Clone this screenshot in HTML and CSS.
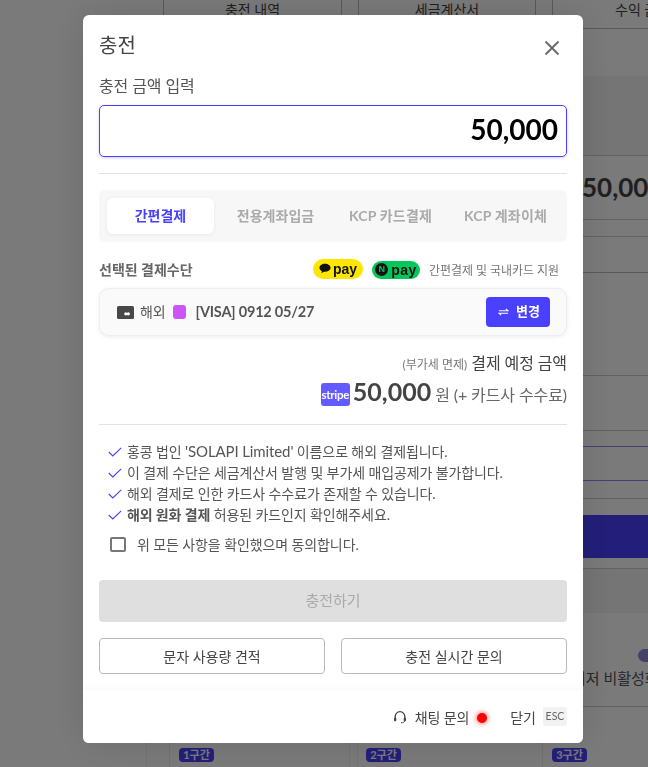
FILE: index.html
```html
<!DOCTYPE html>
<html lang="ko">
<head>
<meta charset="utf-8">
<title>충전</title>
<link rel="stylesheet" href="styles.css">
</head>
<body>
<div class="page">
  <div class="tabs-bg">
    <div class="tab-bg tab-a">충전 내역</div>
    <div class="tab-gap"></div>
    <div class="tab-bg tab-b">세금계산서</div>
    <div class="tab-gap"></div>
    <div class="tab-bg tab-c">수익 금액</div>
  </div>
  <div class="row-bg r48"></div>
  <div class="row-bg r79 shade"></div>
  <div class="row-bg r64 amount-bg">50,000</div>
  <div class="row-bg r17"></div>
  <div class="row-bg r36"></div>
  <div class="row-bg r103"></div>
  <div class="row-bg r55"></div>
  <div class="row-bg r16 blue-line"></div>
  <div class="row-bg r34 blue-line"></div>
  <div class="row-bg r18"></div>
  <div class="row-bg r16 no-line"></div>
  <div class="band-bg"></div>
  <div class="row-bg r11"></div>
  <div class="row-bg r44 shade no-line"></div>
  <div class="row-bg r94 off-bg">
    <span class="pill-bg"></span>
    <span class="off-text">최저 비활성화</span>
  </div>
  <div class="tiers-bg">
    <div class="tier-bg tier-pad"></div>
    <div class="tier-bg tier-lead"></div>
    <div class="tier-bg tier-a"><span class="tier-badge">1구간</span></div>
    <div class="tier-bg tier-gap"></div>
    <div class="tier-bg tier-b"><span class="tier-badge">2구간</span></div>
    <div class="tier-bg tier-c"><span class="tier-badge">3구간</span></div>
  </div>
</div>

<div class="overlay">
  <section class="modal">
    <div class="modal-body">
      <header class="modal-head">
        <h1 class="modal-title">충전</h1>
        <svg class="close" viewBox="0 0 16 16" width="16" height="16"><path d="M1.500 1.500 14.500 14.500M14.500 1.500 1.500 14.500" stroke="#6a6a6a" stroke-width="1.900" fill="none"/></svg>
      </header>
      <div class="field-label">충전 금액 입력</div>
      <div class="amount-input">50,000</div>
      <hr class="rule rule-a">
      <nav class="pay-tabs">
        <div class="pay-tab active">간편결제</div>
        <div class="pay-tab">전용계좌입금</div>
        <div class="pay-tab kcp">KCP 카드결제</div>
        <div class="pay-tab kcp">KCP 계좌이체</div>
      </nav>
      <div class="method-head">
        <div class="method-title">선택된 결제수단</div>
        <div class="badges">
          <span class="paybadge kakao"><svg viewBox="0 0 14 12" width="12" height="11"><path d="M7 .5C3.300.5.5 2.600.5 5.200c0 1.700 1.200 3.100 2.900 3.900L2.800 11.500 5.600 9.700C6.100 9.800 6.500 9.800 7 9.800c3.700 0 6.500-2 6.500-4.600S10.700.5 7 .5Z" fill="#111"/></svg>pay</span>
          <span class="paybadge naver"><span class="n-dot">N</span>pay</span>
          <span class="badge-note">간편결제 및 국내카드 지원</span>
        </div>
      </div>
      <div class="method-card">
        <svg class="card-ico" viewBox="0 0 17 13" width="17" height="13"><rect width="17" height="13" rx="1.500" fill="#484848"/><circle cx="8.800" cy="7.800" r="1.600" fill="#fff"/><circle cx="11.300" cy="7.800" r="1.600" fill="#fff"/></svg>
        <span class="region">해외</span>
        <span class="swatch"></span>
        <span class="card-name">[VISA] 0912 05/27</span>
        <button class="change-btn"><svg viewBox="0 0 12 10" width="11" height="10"><path d="M1 3.600H10.800L8.600 1.600M11 6.400H1.200L3.400 8.400" stroke="#fff" stroke-width="1.200" fill="none"/></svg><span class="change-label">변경</span></button>
      </div>
      <div class="sum-head"><span class="vat">(부가세 면제)</span> <span class="sum-title">결제 예정 금액</span></div>
      <div class="sum-line">
        <span class="stripe">stripe</span>
        <span class="sum-amount">50,000</span>
        <span class="sum-note">원 (+ 카드사 수수료)</span>
      </div>
      <hr class="rule rule-b">
      <ul class="notes">
        <li class="note"><svg viewBox="0 0 14 10" width="14" height="10"><path d="M.8 5 4.800 9 13.200 .8" stroke="#4a40ff" stroke-width="1.100" fill="none"/></svg><span>홍콩 법인 <span class="latin">'SOLAPI Limited'</span> 이름으로 해외 결제됩니다.</span></li>
        <li class="note"><svg viewBox="0 0 14 10" width="14" height="10"><path d="M.8 5 4.800 9 13.200 .8" stroke="#4a40ff" stroke-width="1.100" fill="none"/></svg>이 결제 수단은 세금계산서 발행 및 부가세 매입공제가 불가합니다.</li>
        <li class="note"><svg viewBox="0 0 14 10" width="14" height="10"><path d="M.8 5 4.800 9 13.200 .8" stroke="#4a40ff" stroke-width="1.100" fill="none"/></svg>해외 결제로 인한 카드사 수수료가 존재할 수 있습니다.</li>
        <li class="note"><svg viewBox="0 0 14 10" width="14" height="10"><path d="M.8 5 4.800 9 13.200 .8" stroke="#4a40ff" stroke-width="1.100" fill="none"/></svg><span><b class="strong">해외 원화 결제</b> 허용된 카드인지 확인해주세요.</span></li>
      </ul>
      <label class="agree"><span class="checkbox"></span>위 모든 사항을 확인했으며 동의합니다.</label>
      <button class="submit">충전하기</button>
      <div class="two-btns">
        <button class="ghost">문자 사용량 견적</button>
        <button class="ghost">충전 실시간 문의</button>
      </div>
    </div>
    <footer class="modal-foot">
      <svg class="headset" viewBox="0 0 14 14" width="14" height="14"><path d="M2.200 8V6.500a4.800 4.800 0 0 1 9.600 0V8" stroke="#444" stroke-width="1.300" fill="none"/><rect x="1" y="7.500" width="2.300" height="3.800" rx="1" fill="#444"/><rect x="10.700" y="7.500" width="2.300" height="3.800" rx="1" fill="#444"/><path d="M11.500 11c0 1.300-1.500 1.800-3.500 1.800" stroke="#444" stroke-width="1" fill="none"/></svg>
      <span class="foot-text chat">채팅 문의</span>
      <span class="red-dot"></span>
      <span class="foot-text">닫기</span>
      <span class="esc">ESC</span>
    </footer>
  </section>
</div>
</body>
</html>
```
FILE: styles.css
```css
* { box-sizing: border-box; }
html, body { margin: 0; height: 100%; overflow: hidden; }
body { font-family: Lato, "Noto Sans CJK KR", sans-serif; background: #fff; color: #444; }

/* page behind the dialog */
.page { height: 767px; padding-left: 100px; overflow: hidden; background: #fff; }
.tabs-bg { display: flex; height: 29px; font-size: 14px; color: #444; }
.tab-bg { flex: none; text-align: center; line-height: 19px; border-left: 1px solid #bbb; border-right: 1px solid #bbb; border-bottom: 1px solid #bbb; }
.tab-a { width: 179px; margin-left: 63px; }
.tab-b { width: 178px; }
.tab-c { width: 200px; text-align: left; padding-left: 62px; white-space: nowrap; }
.tab-gap { flex: none; width: 16px; }
.row-bg { border-bottom: 1px solid #ccc; }
.no-line { border-bottom: 0; }
.r48 { height: 47px; border-bottom: 0; }
.r79 { height: 80px; }
.r64 { height: 64px; }
.r17 { height: 17px; }
.r36 { height: 36px; border-bottom-color: #bbb; }
.r103 { height: 103px; }
.r55 { height: 55px; }
.r16 { height: 16px; }
.r34 { height: 34px; }
.r18 { height: 18px; }
.r11 { height: 11px; }
.r44 { height: 44px; }
.r94 { height: 94px; }
.shade { background: #f5f5f5; }
.blue-line { border-bottom-color: #8d87f5; }
.amount-bg { padding-left: 482px; font-size: 26px; font-weight: 700; line-height: 62px; white-space: nowrap; color: #444; }
.band-bg { height: 43px; background: #4a40ff; }
.off-bg { display: flex; flex-direction: column; align-items: flex-start; padding: 36px 0 0 472px; white-space: nowrap; font-size: 15px; color: #555; }
.pill-bg { width: 40px; height: 13px; margin-left: 66px; border-radius: 7px; background: #8f8bd8; }
.off-text { line-height: 20px; margin-top: 6px; }
.tiers-bg { display: flex; height: 61px; }
.tier-bg { flex: none; padding-top: 41px; height: 61px; }
.tier-pad { width: 46px; }
.tier-lead { width: 24px; border-left: 1px solid #eee; border-right: 1px solid #eee; }
.tier-a { width: 180px; padding-left: 9px; border-right: 1px solid #eee; }
.tier-gap { width: 7px; }
.tier-b { width: 186px; padding-left: 8px; border-left: 1px solid #eee; border-right: 1px solid #eee; }
.tier-c { width: 100px; padding-left: 9px; }
.tier-badge { display: block; height: 14px; width: 35px; border-radius: 4px; background: #4a40ff; color: #fff; font-size: 11px; font-weight: 700; line-height: 14px; text-align: center; white-space: nowrap; }

/* overlay */
.overlay { position: fixed; inset: 0; background: rgba(0,0,0,.52); padding: 15px 0 0 83px; }
.modal { width: 500px; height: 728px; display: flex; flex-direction: column; background: #fff; border-radius: 6px; box-shadow: 0 0 40px rgba(0,0,0,.13); overflow: hidden; }
.modal-body { flex: 1; padding: 0 16px; }
.modal-head { display: flex; justify-content: space-between; height: 50px; }
.modal-title { margin: 14px 0 0; font-size: 20px; line-height: 32px; font-weight: 400; color: #444; }
.close { margin: 25px 7px 0 0; }
.field-label { font-size: 16px; line-height: 24px; color: #555; margin-top: 9px; letter-spacing: -.1px; }
.amount-input { height: 52px; margin-top: 7px; border: 1.5px solid #4a40ff; border-radius: 5px; font-size: 28px; font-weight: 700; color: #000; text-align: right; line-height: 47px; padding-right: 8px; box-shadow: 0 1px 3px rgba(74,64,255,.25); }
.rule { margin: 0; border: 0; height: 1px; background: #e2e2e2; }
.rule-a { margin-top: 16px; }
.pay-tabs { display: flex; gap: 8px; height: 52px; margin-top: 16px; padding: 8px; background: #f7f7f7; border-radius: 6px; }
.pay-tab { flex: 1; text-align: center; font-size: 14px; font-weight: 700; line-height: 36px; color: #aaa; border-radius: 6px; white-space: nowrap; }
.pay-tab.kcp { letter-spacing: .2px; }
.pay-tab.active { background: #fff; color: #4a40ff; box-shadow: 0 1px 4px rgba(0,0,0,.06); }
.method-head { display: flex; justify-content: space-between; align-items: center; height: 46px; }
.method-title { font-size: 14px; font-weight: 700; color: #666; margin-top: 7px; }
.badges { display: flex; align-items: center; padding-right: 8px; margin-top: 9px; }
.paybadge { display: inline-flex; align-items: center; justify-content: center; border-radius: 10px; font-family: "Liberation Sans", sans-serif; font-weight: 700; color: #111; font-size: 14px; line-height: 18px; }
.kakao { width: 50px; height: 20px; background: #ffe600; gap: 2px; margin: -2px 9px 0 0; }
.naver { width: 48px; height: 18px; background: #03c75a; gap: 3px; margin-right: 9px; letter-spacing: .5px; }
.n-dot { width: 13px; height: 13px; border-radius: 50%; background: #111; color: #03c75a; font-size: 9px; line-height: 13px; text-align: center; letter-spacing: 0; }
.badge-note { font-size: 12px; color: #777; letter-spacing: -.05px; }
.method-card { display: flex; align-items: center; height: 48px; padding: 0 16px 0 17px; background: #fafafa; border: 1px solid #eee; border-radius: 10px; box-shadow: 0 1px 4px rgba(0,0,0,.08); }
.region { font-size: 14px; color: #555; margin: 0 0 2px 6px; letter-spacing: -.2px; }
.swatch { width: 13px; height: 14px; border-radius: 3px; background: #cc55f5; margin: 0 9px 0 8px; }
.card-name { font-size: 14.500px; font-weight: 700; color: #555; flex: 1; letter-spacing: -.2px; margin-bottom: 2px; }
.change-btn { display: flex; align-items: center; justify-content: center; gap: 7px; width: 64px; height: 30px; border: 0; border-radius: 4px; background: #4a40ff; color: #fff; font: 700 13px Lato, "Noto Sans CJK KR", sans-serif; padding: 0 0 0 2px; }
.change-label { margin-bottom: 3px; }
.sum-head { text-align: right; margin-top: 14px; line-height: 26px; height: 26px; }
.vat { font-size: 12px; color: #777; }
.sum-title { font-size: 16px; color: #444; letter-spacing: -.1px; }
.sum-line { display: flex; justify-content: flex-end; align-items: center; height: 34px; margin-top: 1px; }
.stripe { width: 29px; height: 23px; border-radius: 3px; background: #635bff; color: #fff; font-size: 11.500px; font-weight: 700; line-height: 23px; text-align: center; letter-spacing: -.3px; margin-right: 3px; }
.sum-amount { font-size: 25px; font-weight: 700; color: #444; margin: -7px 4px 0 0; }
.sum-note { font-size: 16px; color: #666; letter-spacing: -.1px; margin-top: -1px; }
.rule-b { margin-top: 13px; }
.notes { list-style: none; margin: 15px 0 0; padding: 0 0 0 9px; }
.note { display: flex; align-items: center; gap: 5px; height: 21px; font-size: 14px; color: #555; white-space: nowrap; letter-spacing: -.11px; }
.latin { font-size: 15px; }
.note svg { flex: none; margin-top: 3px; }
.strong { font-weight: 700; }
.agree { display: flex; align-items: center; height: 20px; margin: 10px 0 0 11px; font-size: 14px; color: #555; letter-spacing: -.1px; }
.checkbox { width: 16px; height: 15px; border: 2px solid #777; border-radius: 2px; margin-right: 11px; }
.submit { display: block; width: 100%; height: 42px; margin-top: 26px; border: 0; border-radius: 4px; background: #dfdfdf; color: #aaa; font: 400 15px Lato, "Noto Sans CJK KR", sans-serif; padding: 0 0 3px; }
.two-btns { display: flex; gap: 16px; margin-top: 16px; }
.ghost { flex: 1; height: 36px; background: #fff; border: 1px solid #bbb; border-radius: 4px; color: #444; font: 400 14px Lato, "Noto Sans CJK KR", sans-serif; padding: 0; }
.modal-foot { display: flex; align-items: center; justify-content: flex-end; height: 53px; padding: 0 16px; background: #fff; box-shadow: 0 -2px 6px rgba(0,0,0,.03); }
.headset { margin-right: 8px; }
.foot-text { font-size: 14px; color: #444; }
.chat { letter-spacing: -.1px; }
.red-dot { width: 10px; height: 10px; border-radius: 50%; background: #f00; box-shadow: 0 0 5px 1px rgba(255,0,0,.5); margin: 3px 23px 0 8px; }
.esc { width: 24px; height: 19px; margin-left: 7px; background: #f2f2f2; border-radius: 3px; color: #666; font-size: 10.500px; line-height: 19px; text-align: center; }
```
